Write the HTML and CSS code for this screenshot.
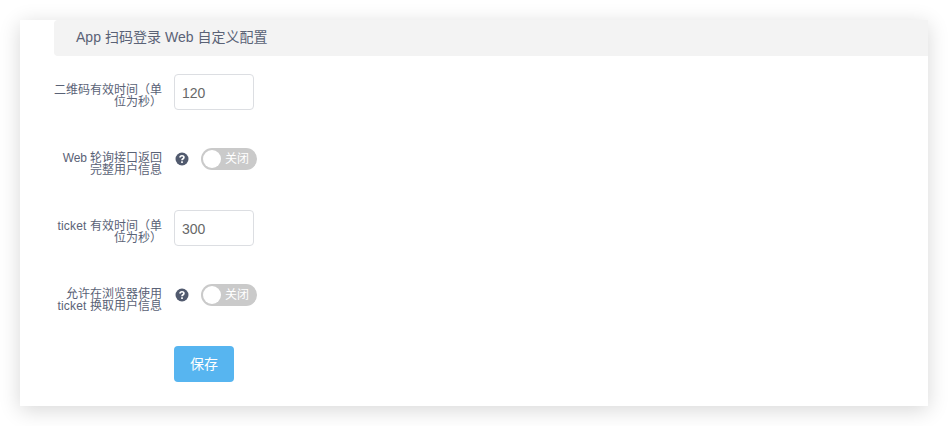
FILE: index.html
```html
<!DOCTYPE html>
<html lang="zh-CN">
<head>
<meta charset="utf-8">
<title>App 扫码登录 Web 自定义配置</title>
<link rel="stylesheet" href="styles.css">
</head>
<body>
<main class="card">
  <h1 class="title">App 扫码登录 Web 自定义配置</h1>
  <form class="form">
    <div class="row">
      <label class="label">二维码有效时间（单<br>位为秒）</label>
      <input class="input" type="text" value="120">
    </div>
    <div class="row">
      <label class="label"><span class="tight">Web</span> 轮询接口返回<br>完整用户信息</label>
      <svg class="help" viewBox="0 0 14 14"><circle cx="7" cy="7" r="6.5"/><path d="M5 5.5C5.1 3.2 9 3.2 8.9 5.4C8.9 6.8 7 6.6 7 8.3"/><path d="M7 9.2V10.9"/></svg>
      <span class="switch"><span class="knob"></span>关闭</span>
    </div>
    <div class="row">
      <label class="label"><span class="wide">ticket</span> 有效时间（单<br>位为秒）</label>
      <input class="input" type="text" value="300">
    </div>
    <div class="row">
      <label class="label">允许在浏览器使用<br><span class="wide">ticket</span> 换取用户信息</label>
      <svg class="help" viewBox="0 0 14 14"><circle cx="7" cy="7" r="6.5"/><path d="M5 5.5C5.1 3.2 9 3.2 8.9 5.4C8.9 6.8 7 6.6 7 8.3"/><path d="M7 9.2V10.9"/></svg>
      <span class="switch"><span class="knob"></span>关闭</span>
    </div>
    <button class="save" type="button">保存</button>
  </form>
</main>
</body>
</html>
```
FILE: styles.css
```css
* { box-sizing: border-box; }
body {
  margin: 0;
  padding: 20px;
  height: 426px;
  overflow: hidden;
  background: #fff;
  color: #5a6276;
  font-family: "Liberation Sans", "Noto Sans CJK SC", sans-serif;
}
.card {
  height: 386px;
  padding-left: 34px;
  background: #fff;
  box-shadow: 0 4px 20px rgba(0, 0, 0, .16);
}
.title {
  margin: 0;
  height: 36px;
  padding-left: 22px;
  border-radius: 4px 0 0 4px;
  background: #f3f3f3;
  font-size: 14px;
  font-weight: 400;
  letter-spacing: .03px;
  line-height: 35px;
}
.form { padding-top: 18px; }
.row {
  display: flex;
  align-items: flex-start;
  height: 68px;
}
.label {
  width: 120px;
  padding: 10px 12px 0 0;
  font-size: 12px;
  line-height: 12px;
  text-align: right;
  white-space: nowrap;
}
.tight { letter-spacing: -.2px; }
.wide { letter-spacing: .2px; }
.input {
  width: 80px;
  height: 36px;
  padding: 2px 7px 0;
  border: 1px solid #dcdee2;
  border-radius: 4px;
  color: #686868;
  font: 14px "Liberation Sans", sans-serif;
}
.help {
  width: 14px;
  height: 14px;
  margin: 10px 12px 0 1px;
  fill: #515a6e;
}
.help path { fill: none; stroke: #fff; stroke-width: 1.7; }
.switch {
  display: flex;
  align-items: center;
  width: 56px;
  height: 22px;
  margin-top: 6px;
  padding-left: 2px;
  border-radius: 11px;
  background: #cacaca;
  color: #fff;
  font-size: 12px;
  line-height: 20px;
}
.knob {
  width: 18px;
  height: 18px;
  margin-right: 4px;
  border-radius: 50%;
  background: #fff;
}
.save {
  display: block;
  width: 60px;
  height: 36px;
  margin-left: 120px;
  padding: 0;
  border: 0;
  border-radius: 4px;
  background: #57b5f0;
  color: #fff;
  font: 14px/34px "Liberation Sans", "Noto Sans CJK SC", sans-serif;
}
```
